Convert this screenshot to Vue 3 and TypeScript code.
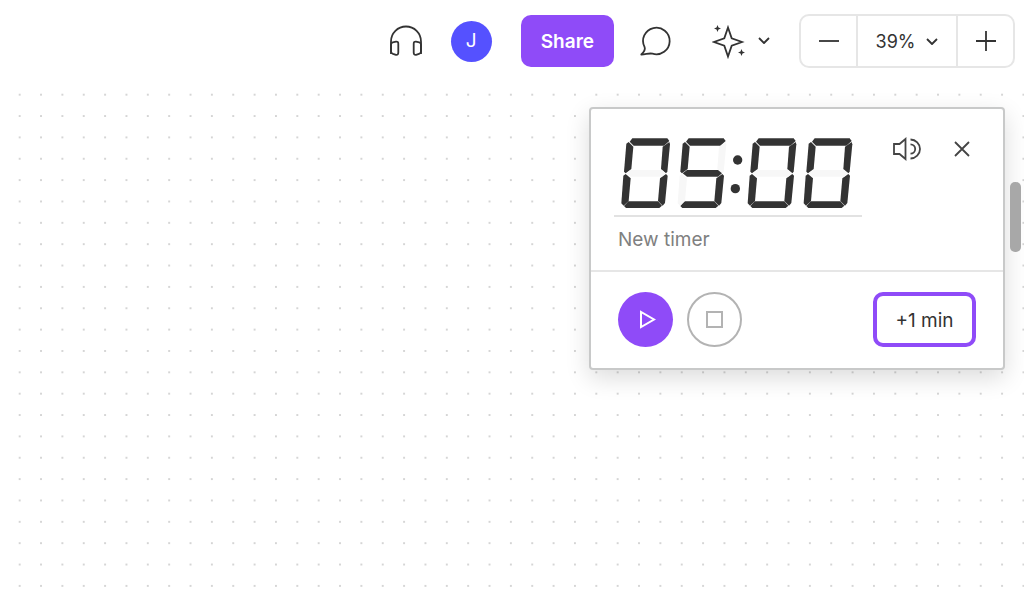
<script setup lang="ts">
import { computed, ref } from 'vue'

type Segment = 'a' | 'b' | 'c' | 'd' | 'e' | 'f' | 'g'

const segmentShapes: Record<Segment, string> = {
  a: '157,130 262,130 268,138 252,152 161,152 149,140',
  b: '268,141 270,148 262,230 258,235 243,222 248,155',
  c: '258,237 263,242 255,324 248,332 234,318 240,250',
  d: '145,319 234,319 246,332 238,339 138,339 132,333',
  e: '137,237 152,250 146,318 131,332 124,325 130,242',
  f: '146,141 160,155 154,222 137,235 132,230 139,146',
  g: '139,235 152,225 245,225 257,235 245,245 152,245',
}
const segmentNames = Object.keys(segmentShapes) as Segment[]

const litSegments: string[] = [
  'abcdef', 'bc', 'abdeg', 'abcdg', 'bcfg', 'acdfg', 'acdefg', 'abc', 'abcdefg', 'abcdfg',
]
const digitOffsets = [0, 169, 379, 547]

const seconds = ref(300)
const name = ref('New timer')
const zoom = ref(39)

const time = computed(() => {
  const m = String(Math.floor(seconds.value / 60)).padStart(2, '0')
  const s = String(seconds.value % 60).padStart(2, '0')
  return `${m}:${s}`
})

const digits = computed(() =>
  time.value
    .replace(':', '')
    .slice(-4)
    .split('')
    .map((char, i) => ({
      shift: `translate(${digitOffsets[i]} 0)`,
      segments: segmentNames.map((key) => ({
        key,
        points: segmentShapes[key],
        lit: litSegments[Number(char)].includes(key),
      })),
    })),
)
</script>

<template>
  <div class="board">
    <header class="toolbar">
      <button class="icon-button audio" aria-label="Start audio">
        <svg width="34" height="34" viewBox="0 0 34 34" class="line">
          <path d="M2 30V17.500a15 15 0 0 1 30 0v12.500" />
          <path d="M2 20.500q.2-1.900 1.700-2.200l3.300-.6q2.300-.3 2.300 2v8.800q0 2.600-2.300 2.300l-3-.9Q2 29.200 2 27.500zM32 20.500q-.2-1.900-1.700-2.200l-3.300-.6q-2.300-.3-2.300 2v8.800q0 2.600 2.300 2.300l3-.9q2-.6 2-2.300z" />
        </svg>
      </button>
      <button class="avatar" aria-label="Account J">J</button>
      <button class="share">Share</button>
      <button class="icon-button comment" aria-label="Comments">
        <svg width="34" height="34" viewBox="0 0 34 34" class="line">
          <path d="M5.600 23.200A13.300 13.300 0 1 1 13.500 29.700C10 28.800 6.500 30.600 2.300 30.500C4.500 28.500 6.800 26.200 5.600 23.200Z" />
        </svg>
      </button>
      <button class="icon-button actions" aria-label="Actions">
        <svg width="34" height="36" viewBox="0 0 34 36" class="line">
          <path d="M16 4.500l3.700 10.800L30 19l-10.300 3.700L16 33.500l-3.700-10.800L2 19l10.300-3.700z" stroke-linejoin="miter" />
          <path class="solid" d="M5.500 2l1 2.500 2.500 1-2.500 1-1 2.500-1-2.500-2.500-1 2.500-1zM29.500 26l1 2.500 2.500 1-2.500 1-1 2.500-1-2.500-2.500-1 2.500-1z" />
        </svg>
        <svg width="12" height="8" viewBox="0 0 12 8" class="line"><path d="M1 1l5 5 5-5" /></svg>
      </button>
      <div class="zoom" role="group" aria-label="Zoom">
        <button class="step" aria-label="Zoom out" @click="zoom--">
          <svg width="20" height="20" viewBox="0 0 20 20" class="line"><path d="M0 10h20" /></svg>
        </button>
        <button class="level">
          {{ zoom }}%
          <svg width="12" height="8" viewBox="0 0 12 8" class="line"><path d="M1 1l5 5 5-5" /></svg>
        </button>
        <button class="step" aria-label="Zoom in" @click="zoom++">
          <svg width="20" height="20" viewBox="0 0 20 20" class="line"><path d="M0 10h20M10 0v20" /></svg>
        </button>
      </div>
    </header>

    <main class="canvas">
      <svg class="grid" aria-hidden="true">
        <defs>
          <pattern id="dots" width="64" height="64" patternUnits="userSpaceOnUse" patternTransform="translate(9 2) scale(0.3337)">
            <circle cx="32" cy="32" r="3" fill="#c8c8c8" />
          </pattern>
        </defs>
        <rect width="100%" height="100%" fill="url(#dots)" />
      </svg>

      <section class="timer" aria-label="Timer">
        <div class="top">
          <div class="fields">
            <div class="display" role="timer" :aria-label="time">
              <svg width="248" height="72" viewBox="102 129 744 216">
                <g v-for="(digit, i) in digits" :key="i" :transform="digit.shift">
                  <polygon
                    v-for="segment in digit.segments"
                    :key="segment.key"
                    :points="segment.points"
                    :class="segment.lit ? 'lit' : 'unlit'"
                  />
                </g>
                <circle cx="473" cy="195" r="14" class="lit" />
                <circle cx="466" cy="281" r="14" class="lit" />
              </svg>
            </div>
            <input v-model="name" class="name" aria-label="Timer name" />
          </div>
          <div class="tools">
            <button class="icon-button" aria-label="Sound">
              <svg width="30" height="24" viewBox="0 0 30 24" class="line">
                <path d="M2 7h5.500L13.500 2v20l-6-5H2z" stroke-linejoin="miter" />
                <path d="M18.500 2.500a9.500 9.500 0 0 1 0 19M18.500 7.300a4.700 4.700 0 0 1 0 9.400" />
              </svg>
            </button>
            <button class="icon-button" aria-label="Close">
              <svg width="16" height="16" viewBox="0 0 16 16" class="line"><path d="M1 1l14 14M15 1L1 15" /></svg>
            </button>
          </div>
        </div>
        <div class="bottom">
          <button class="round play" aria-label="Start">
            <svg width="19" height="19" viewBox="0 0 19 19"><path d="M3 2v15l13-7.500z" /></svg>
          </button>
          <button class="round stop" aria-label="Stop">
            <svg width="17" height="17" viewBox="0 0 17 17"><path d="M1 1h15v15H1z" /></svg>
          </button>
          <button class="add" @click="seconds += 60">+1 min</button>
        </div>
      </section>

      <div class="scroll-thumb"></div>
    </main>
  </div>
</template>

<style>
body {
  background: #fff;
}
</style>

<style scoped>
.board {
  display: flex;
  flex-direction: column;
  min-height: 100vh;
  overflow: hidden;
  color: #333;
  font-family: Inter, "Liberation Sans", sans-serif;
  font-size: 19px;
  line-height: 24px;
}

.board *,
.board {
  box-sizing: border-box;
}

button,
input {
  margin: 0;
  padding: 0;
  border: 0;
  background: none;
  color: inherit;
  font: inherit;
}

svg {
  display: block;
  flex: none;
}

.line {
  fill: none;
  stroke: #333;
  stroke-width: 1.8;
  stroke-linejoin: round;
}

.tools .line {
  stroke: #444;
}

.solid {
  fill: #333;
  stroke: none;
}

.toolbar {
  display: flex;
  align-items: center;
  justify-content: flex-end;
  height: 82px;
  padding-right: 9px;
}

.icon-button {
  display: flex;
  align-items: center;
}

.avatar {
  width: 41px;
  height: 41px;
  margin: 0 29px 0 28px;
  border-radius: 50%;
  background: #5551ff;
  color: #fff;
  text-align: center;
}

.share {
  height: 52px;
  padding: 2px 20px 0;
  border-radius: 10px;
  background: #8f4bf8;
  color: #fff;
  font-weight: 600;
}

.comment {
  margin-left: 25px;
}

.actions {
  gap: 12px;
  margin: 0 29px 0 39px;
}

.zoom {
  display: flex;
  height: 54px;
  border: 2px solid #e6e6e6;
  border-radius: 10px;
}

.step {
  display: flex;
  align-items: center;
  justify-content: center;
  width: 55px;
}

.level {
  display: flex;
  align-items: center;
  justify-content: center;
  gap: 11px;
  width: 102px;
  padding-top: 2px;
  border: solid #e6e6e6;
  border-width: 0 2px;
  font-size: 18px;
}

.canvas {
  position: relative;
  flex: 1;
}

.grid {
  position: absolute;
  inset: 0;
  width: 100%;
  height: 100%;
}

.timer {
  position: absolute;
  top: 25px;
  right: 19px;
  width: 416px;
  border: 2px solid #c8c9c9;
  border-radius: 4px;
  background: #fff;
  box-shadow: 0 8px 24px rgba(0, 0, 0, 0.14);
}

.top {
  display: flex;
  justify-content: space-between;
  padding: 29px 33px 17px 23px;
  border-bottom: 2px solid #e6e6e6;
}

.display {
  padding-bottom: 5px;
  border-bottom: 2px solid #e2e2e2;
}

.lit {
  fill: #333;
}

.unlit {
  fill: #f7f7f7;
}

.name {
  display: block;
  width: 240px;
  margin: 8px 4px 0;
  height: 28px;
  color: #808080;
}

.tools {
  display: flex;
  align-items: center;
  gap: 32px;
  height: 22px;
}

.bottom {
  display: flex;
  align-items: center;
  gap: 14px;
  padding: 20px 27px 21px;
}

.round {
  display: flex;
  align-items: center;
  justify-content: center;
  width: 55px;
  height: 55px;
  border-radius: 50%;
}

.round path {
  fill: none;
  stroke-width: 2;
}

.play {
  padding-left: 4px;
  background: #8f4bf8;
  stroke: #fff;
}

.stop {
  border: 2px solid #b3b3b3;
  stroke: #b3b3b3;
}

.add {
  width: 103px;
  height: 55px;
  margin-left: auto;
  padding-top: 2px;
  border: 4px solid #8f4bf8;
  border-radius: 10px;
}

.scroll-thumb {
  position: absolute;
  top: 100px;
  right: 3px;
  width: 11px;
  height: 70px;
  border-radius: 5px;
  background: #a8a8a8;
}
</style>
